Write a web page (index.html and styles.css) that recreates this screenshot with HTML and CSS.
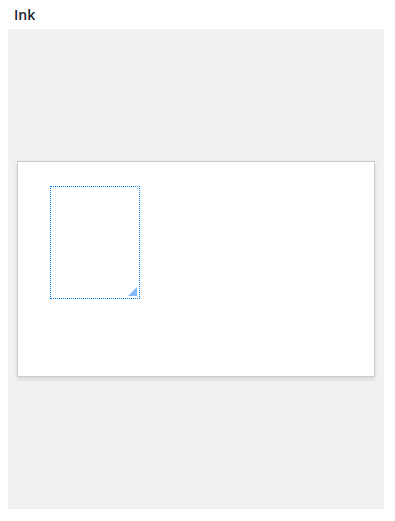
FILE: index.html
```html
<!DOCTYPE html>
<html>
<head>
    <title>Ink</title>
    <link rel="stylesheet" href="styles.css">
</head>
<body>
    <div class="title">Ink</div>
    <div class="stage">
        <div class="card">
            <div class="ink-box">
                <span class="grip"></span>
            </div>
        </div>
    </div>
</body>
</html>
```

FILE: styles.css
```css
body {
    margin: 0;
    background-color: #ffffff;
    font-family: "Open Sans", "Liberation Sans", Arial, sans-serif;
    color: #1b1b2a;
}

.title {
    height: 29px;
    line-height: 29px;
    padding-left: 14px;
    font-size: 14px;
    font-weight: 600;
}

.stage {
    margin: 0 11px 0 8px;
    height: 480px;
    background-color: #f1f1f1;
    display: flex;
    align-items: center;
    padding: 0 9px;
}

.card {
    flex: 1;
    height: 216px;
    background-color: #ffffff;
    border: 1px solid #cccccc;
    box-shadow: 0 2px 4px rgba(0, 0, 0, 0.12);
    padding: 24px 0 0 32px;
    box-sizing: border-box;
}

.ink-box {
    position: relative;
    width: 88px;
    height: 111px;
    border: 1px dotted #0079f7;
}

.grip {
    position: absolute;
    right: 2px;
    bottom: 2px;
    width: 0;
    height: 0;
    border-left: 9px solid transparent;
    border-bottom: 9px solid #80b9f5;
}
```
